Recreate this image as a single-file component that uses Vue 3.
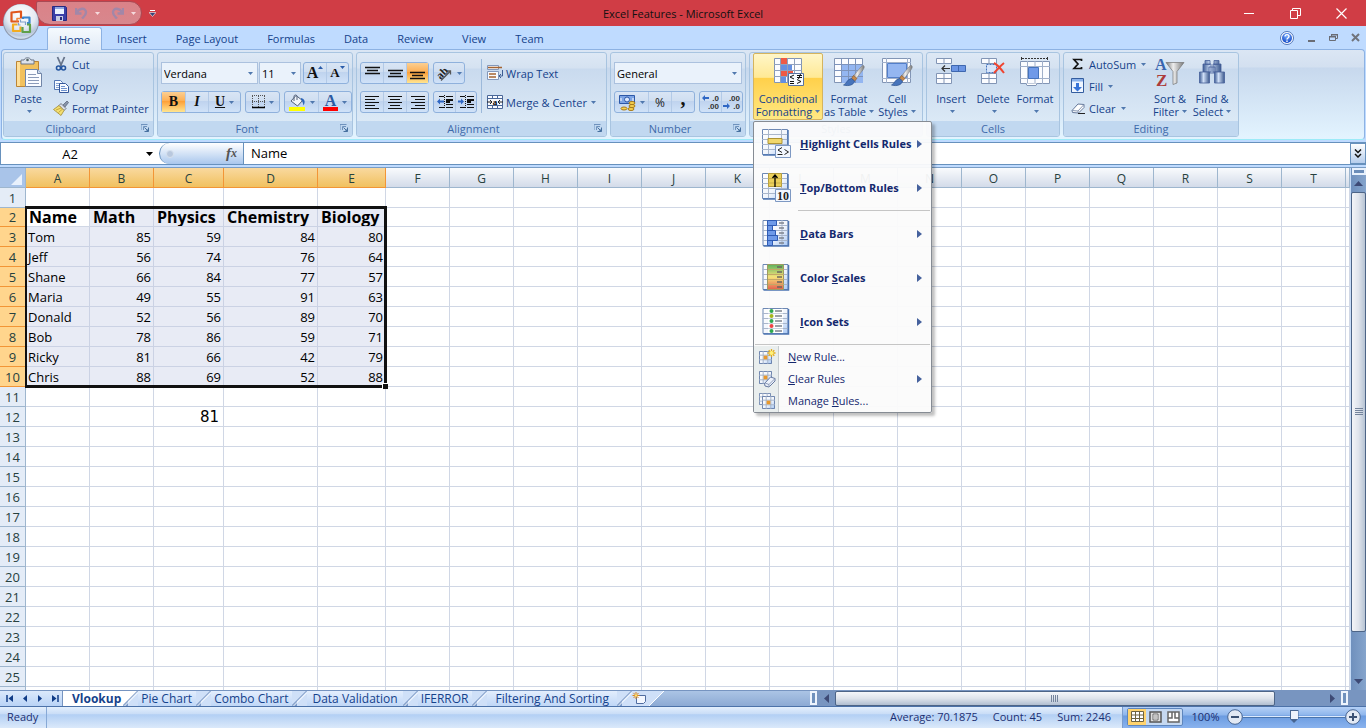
<script setup>
import { ref } from 'vue'

const tabs = ['Home', 'Insert', 'Page Layout', 'Formulas', 'Data', 'Review', 'View', 'Team']
const columns = 'ABCDEFGHIJKLMNOPQRST'.split('')
const data = {
  2: ['Name', 'Math', 'Physics', 'Chemistry', 'Biology'],
  3: ['Tom', 85, 59, 84, 80],
  4: ['Jeff', 56, 74, 76, 64],
  5: ['Shane', 66, 84, 77, 57],
  6: ['Maria', 49, 55, 91, 63],
  7: ['Donald', 52, 56, 89, 70],
  8: ['Bob', 78, 86, 59, 71],
  9: ['Ricky', 81, 66, 42, 79],
  10: ['Chris', 88, 69, 52, 88],
  12: ['', '', 81]
}
const cell = (r, c) => (data[r] && data[r][c] !== undefined ? data[r][c] : '')
const inRange = (r, c) => r >= 2 && r <= 10 && c < 5
const sheets = ['Vlookup', 'Pie Chart', 'Combo Chart', 'Data Validation', 'IFERROR', 'Filtering And Sorting']
const bigItems = [
  { icon: 'm-high', pre: '', key: 'H', post: 'ighlight Cells Rules' },
  { icon: 'm-top', pre: '', key: 'T', post: 'op/Bottom Rules' },
  { icon: 'm-bars', pre: '', key: 'D', post: 'ata Bars', sep: true },
  { icon: 'm-scale', pre: 'Color ', key: 'S', post: 'cales' },
  { icon: 'm-set', pre: '', key: 'I', post: 'con Sets' }
]
const smallItems = [
  { icon: 's-new', pre: '', key: 'N', post: 'ew Rule...' },
  { icon: 's-clear', pre: '', key: 'C', post: 'lear Rules', sub: true },
  { icon: 's-manage', pre: 'Manage ', key: 'R', post: 'ules...' }
]
const zoom = ref(50)
const nameBox = ref('A2')
const formula = ref('Name')
</script>

<template>
  <div class="app">
    <svg class="defs" aria-hidden="true">
      <defs>
        <linearGradient id="gBlue" x1="0" y1="0" x2="1" y2="1"><stop offset="0" stop-color="#fff" /><stop offset=".55" stop-color="#f1f5fc" /><stop offset="1" stop-color="#a8c8f5" /></linearGradient>
        <linearGradient id="gSilver" x1="0" y1="0" x2="1" y2="0"><stop offset="0" stop-color="#777" /><stop offset=".4" stop-color="#eee" /><stop offset="1" stop-color="#777" /></linearGradient>
        <linearGradient id="gNavy" x1="0" y1="0" x2="1" y2="0"><stop offset="0" stop-color="#3d5c94" /><stop offset=".4" stop-color="#cfdff7" /><stop offset="1" stop-color="#3a578c" /></linearGradient>
        <linearGradient id="gScale" x1="0" y1="0" x2="0" y2="1"><stop offset="0" stop-color="#5eb35e" /><stop offset=".5" stop-color="#f6e37a" /><stop offset="1" stop-color="#e5604e" /></linearGradient>
        <radialGradient id="gOrb" cx=".5" cy=".3" r=".75"><stop offset="0" stop-color="#fff" /><stop offset=".55" stop-color="#e6ebf3" /><stop offset=".8" stop-color="#b6c5da" /><stop offset="1" stop-color="#eef6ff" /></radialGradient>
        <radialGradient id="gHelp" cx=".5" cy=".3" r=".7"><stop offset="0" stop-color="#7db0ff" /><stop offset="1" stop-color="#1046c4" /></radialGradient>
      </defs>
      <symbol id="dd" viewBox="0 0 5 3"><path d="M0 0h5L2.500 3z" fill="#5078ae" /></symbol>
      <symbol id="launch" viewBox="0 0 8 8"><path d="M0 6V.5h6.500M2.500 6V2.500H6" fill="none" stroke="#6f92bd" /><path d="M3.500 3.500l3 3M7.500 3.500v4h-4" fill="none" stroke="#47709f" /><path d="M7.500 4.500v3h-3z" fill="#47709f" /></symbol>
      <symbol id="sheet" viewBox="0 0 28 28"><path d="M1.500 1.500h25v25h-25z" fill="url(#gBlue)" stroke="#6d88b4" /><path d="M1 6.500h26M1 11.500h26M1 16.500h26M1 21.500h26M7.500 1v26M20.500 1v26" stroke="#a9b6cb" fill="none" /><path d="M27 2v25H2" fill="none" stroke="#4e75b2" stroke-width="1.500" /></symbol>
      <symbol id="brush" viewBox="0 0 22 22"><path d="M20.500 .5c1.500 1 .5 3-1 5l-7 9-3-2.500L17 3c1.500-2 2.500-3 3.500-2.500z" fill="url(#gSilver)" stroke="#7c7f86" stroke-width=".6" /><path d="M10.500 10.500l3.500 3-2.500 2.500-3-2.500z" fill="#c88a4b" stroke="#87552c" stroke-width=".6" /><path d="M8.500 13.500l3 2.500c-.5 4-6 5.500-11 4 3-1 3.500-6 8-6.500z" fill="#4774bb" stroke="#29508e" stroke-width=".7" /></symbol>
      <symbol id="m-high" viewBox="0 0 32 32"><use href="#sheet" x="1" y="0" width="28" height="28" /><path d="M8 10.500h14v5H8z" fill="#f1d76b" stroke="#ad9335" /><path d="M15.500 17.500h15v12h-15z" fill="#f2f7ff" stroke="#7e99c3" /><path d="M22 19.500l-4 2.500 4 2.500M17.500 26.500h5M24.500 21.500l4 2.500-4 2.500" fill="none" stroke="#222" /></symbol>
      <symbol id="m-top" viewBox="0 0 32 32"><use href="#sheet" x="1" y="0" width="28" height="28" /><path d="M8.500 1.500h13v13h-13z" fill="#ecd15c" stroke="#b59c3e" /><path d="M8 6.500h14M8 11h14" stroke="#c9ae48" /><path d="M15 15V3M12.500 6L15 3l2.500 3" fill="none" stroke="#000" stroke-width="1.300" /><path d="M15.500 17.500h15v12h-15z" fill="#f2f7ff" stroke="#7e99c3" /><text x="23" y="28" text-anchor="middle" font-family="Liberation Serif, serif" font-size="12" font-weight="700" fill="#222">10</text></symbol>
      <symbol id="m-bars" viewBox="0 0 32 32"><use href="#sheet" x="1" y="1" width="29" height="28" /><path d="M7.500 2.500h9v5h-4v5h3v5h2v5h-5v5h-5z" fill="#6e9ae9" stroke="#2f5cb5" /><path d="M8 7.500h6M8 12.500h6M8 17.500h9M8 22.500h7" stroke="#2f5cb5" /><path d="M19 5h5M19 10h5M19 15h5M19 20h5M19 25h5" stroke="#7c828d" stroke-width="1.500" /></symbol>
      <symbol id="m-scale" viewBox="0 0 32 32"><use href="#sheet" x="1" y="1" width="29" height="28" /><path d="M7.500 2.500h16v25h-16z" fill="url(#gScale)" stroke="#a09a61" /><path d="M8 7.500h16M8 12.500h16M8 17.500h16M8 22.500h16" stroke="#c4a867" /><path d="M17 5h5M17 10h5M17 15h5M17 20h5M17 25h5" stroke="#6b6660" stroke-width="1.500" /></symbol>
      <symbol id="m-set" viewBox="0 0 32 32"><use href="#sheet" x="1" y="1" width="29" height="28" /><path d="M8 3h15v24H8z" fill="#fff" /><path d="M8 7.500h15M8 12.500h15M8 17.500h15M8 22.500h15" stroke="#c9d2e0" /><circle cx="11.500" cy="5" r="2" fill="#2fa84f" /><circle cx="11.500" cy="10" r="2" fill="#a5b51d" /><circle cx="11.500" cy="15" r="2" fill="#2fa84f" /><circle cx="11.500" cy="20" r="2" fill="#ef4444" /><circle cx="11.500" cy="25" r="2" fill="#2fa84f" /><path d="M15 5h7M15 10h7M15 15h7M15 20h7M15 25h7" stroke="#7c828d" stroke-width="1.500" /></symbol>
      <symbol id="mini" viewBox="0 0 14 14"><path d="M.5.5h13v13H.5z" fill="url(#gBlue)" stroke="#6079a6" /><path d="M0 4.500h14M0 9.500h14M4.500 0v14M9.500 0v14" stroke="#a0afc6" /><path d="M5 5h4v4H5z" fill="#e8982c" /></symbol>
      <symbol id="s-new" viewBox="0 0 17 17"><use href="#mini" x="0" y="2" width="13" height="13" /><path d="M12.500 0v8M8.500 4h8M9.700 1.200l5.600 5.600M15.300 1.200L9.700 6.800" stroke="#e3ad1e" stroke-width="1.300" /><circle cx="12.500" cy="4" r="2" fill="#fff27a" /></symbol>
      <symbol id="s-clear" viewBox="0 0 17 17"><use href="#mini" x="0" y="0" width="13" height="13" /><path d="M5.500 12.500l6-6.500 4.500 1.500v2.500l-6 6-4-1z" fill="#edf2fb" stroke="#6679a0" /><path d="M6 12l4 1.500 6-6M10 13.500V16" fill="none" stroke="#8c9bb8" /></symbol>
      <symbol id="s-manage" viewBox="0 0 17 17"><use href="#mini" x="0" y="0" width="12" height="12" /><use href="#mini" x="3" y="3" width="13" height="13" /></symbol>
    </svg>

    <header class="title">
      <button class="orb" aria-label="Office Button">
        <svg width="38" height="38" viewBox="0 0 38 38"><circle cx="19" cy="19" r="18" fill="#8d99ad" /><circle cx="19" cy="18.500" r="17.300" fill="url(#gOrb)" /><g fill="none" stroke-width="2.200" stroke-linejoin="round"><path d="M17 18.500H9.500V9.500l9.500-1v7" stroke="#e0561c" /><path d="M15 18.500v-3h3" stroke="#f0873a" stroke-width="1.600" /><path d="M21 16v-1.500h6.500V20h-2.500" stroke="#3a86cf" /><path d="M15.500 21.500h-4.500V28h7.500v-4.500" stroke="#f3ac20" /><path d="M25 21.500h3V29h-7.500v-5" stroke="#5fa04a" /></g><path d="M18.500 16.500v2.500h2M20.500 19h3v3M18.500 22h-2v-2" fill="none" stroke="#7f9fcb" stroke-width="1.200" /></svg>
      </button>
      <div class="qat">
        <button aria-label="Save"><svg width="15" height="15" viewBox="0 0 15 15"><path d="M.5.500h13l1 1v13H.5z" fill="#3b3fa8" stroke="#262a80" /><path d="M3 1h9v7H3z" fill="#eaf2ff" /><path d="M3 1h9v2H3z" fill="#8fa6e0" /><path d="M4 10h7v5H4z" fill="#c8cde4" /><path d="M8 11h2v3H8z" fill="#272b7b" /></svg></button>
        <button aria-label="Undo"><svg width="13" height="14" viewBox="0 0 13 14"><path d="M1 2v5.500h5.500M1.500 7C4 2 11 1 11 6.500c0 3-2.500 4.500-4 6" fill="none" stroke="#a287a8" stroke-width="2.400" /></svg></button>
        <button aria-label="Undo list" class="arrow"><svg width="5" height="3"><path d="M0 0h5L2.500 3z" fill="#f5dadd" /></svg></button>
        <button aria-label="Redo"><svg width="13" height="14" viewBox="0 0 13 14"><path d="M12 2v5.500H6.500M11.500 7C9 2 2 1 2 6.500c0 3 2.500 4.500 4 6" fill="none" stroke="#a287a8" stroke-width="2.400" /></svg></button>
        <button aria-label="Redo list" class="arrow"><svg width="5" height="3"><path d="M0 0h5L2.500 3z" fill="#f5dadd" /></svg></button>
      </div>
      <button class="custom" aria-label="Customize Quick Access Toolbar"><svg width="7" height="7"><path d="M1 0h5v1H1z" fill="#fff" /><path d="M0 2.500h7L3.500 6.500z" fill="#33457a" stroke="#f5dede" stroke-width=".7" /></svg></button>
      <h1>Excel Features - Microsoft Excel</h1>
      <div class="winbtns">
        <button aria-label="Minimize"><svg width="11" height="11"><path d="M0 5.500h10" stroke="#fff" /></svg></button>
        <button aria-label="Restore"><svg width="11" height="11"><path d="M.5 2.500h7v8h-7zM2.500 2.500v-2h8v7h-3" fill="none" stroke="#fff" /></svg></button>
        <button aria-label="Close"><svg width="11" height="11"><path d="M.5.500l10 10M10.500.500l-10 10" stroke="#fff" stroke-width="1.200" /></svg></button>
      </div>
    </header>

    <nav class="tabs">
      <button v-for="(t, i) in tabs" :key="t" :class="['tab', { on: i === 0 }]">{{ t }}</button>
      <div class="docbtns">
        <button aria-label="Help"><svg width="14" height="14"><circle cx="7" cy="7" r="6.500" fill="#fff" stroke="#5075b8" /><circle cx="7" cy="7" r="5" fill="url(#gHelp)" /><path d="M5 5.500C5 3 9 3 9 5.500 9 7 7 7 7 8.500M7 9.500V11" fill="none" stroke="#fff" stroke-width="1.400" /></svg></button>
        <button aria-label="Minimize workbook"><svg width="9" height="10"><path d="M1 8h7" stroke="#6a6d75" stroke-width="2" /></svg></button>
        <button aria-label="Restore workbook"><svg width="9" height="10"><path d="M2.500 3V1.500h6v4H7M.5 3.500h6v4h-6z" fill="none" stroke="#6a6d75" /><path d="M0 3h7v1.500H0M2 1h7v1.500H2" fill="#6a6d75" /></svg></button>
        <button aria-label="Close workbook"><svg width="9" height="9"><path d="M1 1l7 7M8 1L1 8" stroke="#70747c" stroke-width="2" /></svg></button>
      </div>
    </nav>

    <section class="ribbon">
      <section class="group g-clip">
        <div class="body">
          <button class="big w41"><svg width="32" height="32" viewBox="0 0 32 32"><path d="M4.500 4.500h22v25h-22z" fill="#f2c15d" stroke="#bb8536" /><path d="M5 5h3v24H5z" fill="#ffe09a" /><path d="M9 3h3c1-3 6-3 7 0h3v4H9z" fill="#dce2ec" stroke="#6c7789" /><circle cx="15.500" cy="3" r="1.300" fill="#566" /><path d="M13.500 12.500h12l4 4v13h-16z" fill="#fafcff" stroke="#7186a8" /><path d="M25.500 12.500v4h4" fill="#ccd9ee" stroke="#7186a8" /><path d="M16 17.500h8M16 20.500h11M16 23.500h11M16 26.500h11" stroke="#8b9bb9" /></svg><span>Paste</span><span class="l2"><svg class="dd"><use href="#dd" /></svg></span></button>
          <div class="stack">
            <button class="small"><svg width="16" height="16" viewBox="0 0 16 16"><path d="M4.500 1l4 9M11.500 1l-4 9" stroke="#67748a" stroke-width="1.800" /><circle cx="5.500" cy="12" r="2" fill="none" stroke="#24559f" stroke-width="1.600" /><circle cx="10.500" cy="12" r="2" fill="none" stroke="#24559f" stroke-width="1.600" /></svg>Cut</button>
            <button class="small"><svg width="16" height="16" viewBox="0 0 16 16"><path d="M1.500 2.500h6l2 2v7h-8z" fill="#f8fbff" stroke="#5377b5" /><path d="M3 5.500h4M3 7.500h4M3 9.500h3" stroke="#85a2d2" /><path d="M6.500 5.500h6l3 3v6h-9z" fill="#f8fbff" stroke="#35589b" /><path d="M8 8.500h4M8 10.500h6M8 12.500h6" stroke="#6e92ce" /></svg>Copy</button>
            <button class="small"><svg width="16" height="16" viewBox="0 0 16 16"><path d="M10 5l4-4 1.500 1.500L12 7z" fill="#8894a8" stroke="#505c74" stroke-width=".7" /><path d="M8 3.500l5 5-2 2-5-5z" fill="#d9dde6" stroke="#747a86" /><path d="M6 5.500l5 5-3 5L.5 9.500z" fill="#f3df72" stroke="#a18a31" stroke-width=".8" /><path d="M3 10l5-2M5.500 12.500l3.500-3" stroke="#c9a93c" /></svg>Format Painter</button>
          </div>
        </div>
        <footer>Clipboard<button class="launch" aria-label="Clipboard options"><svg width="8" height="8"><use href="#launch" /></svg></button></footer>
      </section>

      <section class="group g-font">
        <div class="body rows">
          <div class="row tight">
            <label class="combo c-font"><select aria-label="Font"><option>Verdana</option></select><svg class="dd"><use href="#dd" /></svg></label>
            <label class="combo c-size"><select aria-label="Font size"><option>11</option></select><svg class="dd"><use href="#dd" /></svg></label>
            <div class="seg push">
              <button class="ser a1" aria-label="Grow Font">A<svg width="5" height="3"><path d="M0 3h5L2.500 0z" fill="#2a5caa" /></svg></button>
              <button class="ser a2" aria-label="Shrink Font">A<svg width="5" height="3"><path d="M0 0h5L2.500 3z" fill="#2a5caa" /></svg></button>
            </div>
          </div>
          <div class="row">
            <div class="seg"><button class="ser on">B</button><button class="ser it">I</button><button class="ser un w32"><span>U</span><svg class="dd"><use href="#dd" /></svg></button></div>
            <div class="seg"><button class="w33" aria-label="Borders"><svg width="13" height="14"><path d="M.5 1v11M6.500 1v11M12.500 1v11M0 .5h13M0 6.500h13" stroke="#555" stroke-dasharray="1 1" /><path d="M0 12.500h13" stroke="#000" stroke-width="1.500" /></svg><svg class="dd"><use href="#dd" /></svg></button></div>
            <div class="seg push"><button class="w33" aria-label="Fill Color"><svg width="17" height="17" viewBox="0 0 17 17"><path d="M7 1.500l6.500 5-5 5.500L2 7z" fill="#f1f5fa" stroke="#53617a" /><path d="M5 7V2.500c0-2 3-2 3 0V6" fill="none" stroke="#53617a" /><path d="M12 4c4 1 4.500 4 2.500 7.500C14 9 13.500 7 12 6z" fill="#2c65b8" /><path d="M0 13h16v4H0z" fill="#ff0" /></svg><svg class="dd"><use href="#dd" /></svg></button>
              <button class="w33 fcol" aria-label="Font Color"><span class="ser">A</span><svg class="dd"><use href="#dd" /></svg></button></div>
          </div>
        </div>
        <footer>Font<button class="launch" aria-label="Font options"><svg width="8" height="8"><use href="#launch" /></svg></button></footer>
      </section>

      <section class="group g-align">
        <div class="body">
          <div class="rows">
            <div class="row">
              <div class="seg">
                <button class="w22" aria-label="Top Align"><svg width="15" height="14"><path d="M0 1.500h15M2 4.500h11M0 7.500h15" stroke="#111" stroke-width="1.300" /></svg></button>
                <button aria-label="Middle Align"><svg width="15" height="14"><path d="M0 4.500h15M2 7.500h11M0 10.500h15" stroke="#111" stroke-width="1.300" /></svg></button>
                <button class="on w22" aria-label="Bottom Align"><svg width="15" height="14"><path d="M0 6.500h15M2 9.500h11M0 12.500h15" stroke="#111" stroke-width="1.300" /></svg></button>
              </div>
              <div class="seg"><button class="w30" aria-label="Orientation"><svg width="17" height="16" viewBox="0 0 17 16"><path d="M5 15.500L14.500 6M11 6h3.500v3.500" fill="none" stroke="#555" stroke-width="1.300" /><text x="1" y="12" transform="rotate(-45 6 9)" font-family="Liberation Serif, serif" font-size="11" font-weight="700" fill="#222">ab</text></svg><svg class="dd"><use href="#dd" /></svg></button></div>
            </div>
            <div class="row">
              <div class="seg">
                <button class="w22" aria-label="Align Left"><svg width="14" height="13"><path d="M0 .5h14M0 3.500h10M0 6.500h14M0 9.500h10M0 12.500h14" stroke="#111" /></svg></button>
                <button aria-label="Center"><svg width="14" height="13"><path d="M0 .5h14M2 3.500h10M0 6.500h14M2 9.500h10M0 12.500h14" stroke="#111" /></svg></button>
                <button class="w22" aria-label="Align Right"><svg width="14" height="13"><path d="M0 .5h14M4 3.500h10M0 6.500h14M4 9.500h10M0 12.500h14" stroke="#111" /></svg></button>
              </div>
              <div class="seg">
                <button class="w21" aria-label="Decrease Indent"><svg width="16" height="14"><path d="M2 1.500h5M9 1.500h7M2 12.500h5M9 12.500h7M9 9.500h7" stroke="#111" /><path d="M9 5h7M9 7h4" stroke="#111" stroke-width="2" /><path d="M7.500 0v14" stroke="#111" stroke-dasharray="1 1" /><path d="M0 6.500l3-3v2h4v2H3v2z" fill="#2f67c4" /></svg></button>
                <button class="w21" aria-label="Increase Indent"><svg width="16" height="14"><path d="M2 1.500h5M9 1.500h7M2 12.500h5M9 12.500h7M9 9.500h7" stroke="#111" /><path d="M9 5h7M9 7h4" stroke="#111" stroke-width="2" /><path d="M7.500 0v14" stroke="#111" stroke-dasharray="1 1" /><path d="M6 6.500l-3-3v2H0v2h3v2z" fill="#2f67c4" /></svg></button>
              </div>
            </div>
          </div>
          <i class="vsep"></i>
          <div class="rows">
            <button class="small"><svg width="16" height="16" viewBox="0 0 16 16"><path d="M.5.500h11v4H.5zM.5 6.500h11v8H.5z" fill="#f7faff" stroke="#8398bb" /><path d="M1 2.500h14M2 9h7M2 12h7" stroke="#a56432" stroke-width="1.500" /><path d="M15.500 5v6H12M14 9l-2 2 2 2" fill="none" stroke="#3d5d93" /></svg>Wrap Text</button>
            <button class="small"><svg width="16" height="16" viewBox="0 0 16 16"><path d="M.5 1.500h15v13H.5z" fill="#f7faff" stroke="#4a6798" /><path d="M0 4.500h16M0 11.500h16M5.500 1v3M10.500 1v3M5.500 12v3M10.500 12v3" stroke="#4a6798" /><path d="M0 8h5M3 6l2 2-2 2M16 8h-5M13 6l-2 2 2 2" stroke="#222" fill="none" /><text x="8" y="11" text-anchor="middle" font-family="Liberation Serif, serif" font-weight="700" font-size="9">a</text></svg>Merge &amp; Center<svg class="dd"><use href="#dd" /></svg></button>
          </div>
        </div>
        <footer>Alignment<button class="launch" aria-label="Alignment options"><svg width="8" height="8"><use href="#launch" /></svg></button></footer>
      </section>

      <section class="group g-num">
        <div class="body rows">
          <label class="combo c-num"><select aria-label="Number format"><option>General</option></select><svg class="dd"><use href="#dd" /></svg></label>
          <div class="row">
            <div class="seg">
              <button class="w33" aria-label="Accounting Number Format"><svg width="17" height="17" viewBox="0 0 17 17"><path d="M.5 1.500h15v8H.5z" fill="#7da4e4" stroke="#2c58a8" /><circle cx="8" cy="5.500" r="2.500" fill="#dbe8ff" stroke="#2c58a8" /><path d="M2 4v3M14 4v3" stroke="#fff" /><ellipse cx="13" cy="9" rx="3" ry="1.500" fill="#f8d352" stroke="#a77a18" /><ellipse cx="13" cy="12" rx="3" ry="1.500" fill="#f8d352" stroke="#a77a18" /><ellipse cx="12" cy="15" rx="3" ry="1.500" fill="#f8d352" stroke="#a77a18" /><ellipse cx="5" cy="14.500" rx="3" ry="1.500" fill="#f8d352" stroke="#a77a18" /></svg><svg class="dd"><use href="#dd" /></svg></button>
              <button class="pct">%</button><button class="ser comma">,</button>
            </div>
            <div class="seg push">
              <button class="w21" aria-label="Increase Decimal"><svg width="18" height="16" viewBox="0 0 18 16"><path d="M0 4l3-3v2h4v2H3v2z" fill="#2f67c4" /><text x="17" y="7" text-anchor="end" class="dec">.0</text><text x="17" y="15" text-anchor="end" class="dec">.00</text></svg></button>
              <button class="w21" aria-label="Decrease Decimal"><svg width="18" height="16" viewBox="0 0 18 16"><path d="M7 12L4 9v2H0v2h4v2z" fill="#2f67c4" /><text x="17" y="7" text-anchor="end" class="dec">.00</text><text x="17" y="15" text-anchor="end" class="dec">.0</text></svg></button>
            </div>
          </div>
        </div>
        <footer>Number<button class="launch" aria-label="Number options"><svg width="8" height="8"><use href="#launch" /></svg></button></footer>
      </section>

      <section class="group g-styles">
        <div class="body">
          <div class="cf">
            <button class="big w70 hot"><svg width="32" height="32" viewBox="0 0 32 32"><path d="M2.500 1.500h27v24h-27z" fill="#fbfcff" stroke="#8295b5" /><path d="M9 1h7v6H9zM9 14h12v6H9z" fill="#ee5a45" /><path d="M9 7h11v7H9zM9 20h5v6H9z" fill="#648fe0" /><path d="M2 7.500h28M2 13.500h28M2 19.500h28M8.500 1v25M15.500 1v25M22.500 1v25" stroke="#90a0bd" /><path d="M16.500 16.500h15v12h-15z" fill="#f8fbff" stroke="#5873a1" /><path d="M22 18l-4 2 4 2M25 18.500h5M25 20.500h5M28.500 17l-2 5M18 24.500h4M18 26.500h4M25 22.500l4 2-4 2" fill="none" stroke="#111" /></svg><span>Conditional</span><span class="l2">Formatting<svg class="dd"><use href="#dd" /></svg></span></button>
            <div class="menu" role="menu">
              <template v-for="m in bigItems" :key="m.icon">
                <i v-if="m.sep" class="msep inset"></i>
                <button role="menuitem" class="mi"><svg width="32" height="32"><use :href="'#' + m.icon" /></svg><span>{{ m.pre }}<u>{{ m.key }}</u>{{ m.post }}</span><svg class="sub" width="5" height="8"><path d="M0 0l5 4-5 4z" fill="#45619d" /></svg></button>
              </template>
              <i class="msep"></i>
              <div class="lower">
                <button v-for="m in smallItems" :key="m.icon" role="menuitem" class="mi sm"><svg width="17" height="17"><use :href="'#' + m.icon" /></svg><span>{{ m.pre }}<u>{{ m.key }}</u>{{ m.post }}</span><svg v-if="m.sub" class="sub" width="5" height="8"><path d="M0 0l5 4-5 4z" fill="#45619d" /></svg></button>
              </div>
            </div>
          </div>
          <button class="big w52"><svg width="32" height="32" viewBox="0 0 32 32"><path d="M1.500 1.500h28v24h-28z" fill="#fbfcff" stroke="#8295b5" /><path d="M8 8h22v18H8z" fill="#94b6f1" /><path d="M1 7.500h29M1 13.500h29M1 19.500h29M8.500 1v25M15.500 1v25M22.500 1v25" stroke="#7d93bb" /><use href="#brush" x="10" y="8" width="22" height="22" /></svg><span>Format</span><span class="l2">as Table<svg class="dd"><use href="#dd" /></svg></span></button>
          <button class="big w44"><svg width="32" height="32" viewBox="0 0 32 32"><path d="M1.500 1.500h28v24h-28z" fill="#fbfcff" stroke="#8295b5" /><path d="M1 5.500h29M1 21.500h29M5.500 1v25M26.500 1v25" stroke="#a1b0ca" /><path d="M6.500 6.500h19v14h-19z" fill="#94b6f1" stroke="#537fca" /><use href="#brush" x="10" y="8" width="22" height="22" /></svg><span>Cell</span><span class="l2">Styles<svg class="dd"><use href="#dd" /></svg></span></button>
        </div>
        <footer>Styles</footer>
      </section>

      <section class="group g-cells">
        <div class="body">
          <button class="big w41"><svg width="32" height="32" viewBox="0 0 32 32"><path d="M1.500 1.500h15v5h-15zM9 1v6M1.500 16.500h15v10h-15zM1 21.500h16M9 16v11" fill="#fbfcff" stroke="#8295b5" /><path d="M16.500 8.500h14v6h-14z" fill="#6b95e4" stroke="#3e67af" /><path d="M23.500 8v7" stroke="#3e67af" /><path d="M15 11.500H7M10 8.500l-3 3 3 3" fill="none" stroke="#333" stroke-width="1.200" /></svg><span>Insert</span><span class="l2"><svg class="dd"><use href="#dd" /></svg></span></button>
          <button class="big w42"><svg width="32" height="32" viewBox="0 0 32 32"><path d="M4.500 1.500h15v5h-15zM12 1v6M4.500 16.500h15v10h-15zM4 21.500h16M12 16v11" fill="#fbfcff" stroke="#8295b5" /><path d="M9.500 7.500h10v8h-10z" fill="#d8e5fa" stroke="#4372bd" stroke-dasharray="2 1" /><path d="M17 6c4 2 7 6 10 10M27 6c-4 3-7 7-10 10" fill="none" stroke="#ef4430" stroke-width="2" /></svg><span>Delete</span><span class="l2"><svg class="dd"><use href="#dd" /></svg></span></button>
          <button class="big w41"><svg width="32" height="32" viewBox="0 0 32 32"><path d="M3 1.500h25" stroke="#333" stroke-dasharray="2 1" /><path d="M2.500 0v3M28.500 0v3" stroke="#333" /><path d="M1.500 4.500h29v22h-29z" fill="#fbfcff" stroke="#8295b5" /><path d="M1 9.500h30M1 21.500h30M8.500 4v23M23.500 4v23M16 4v23" stroke="#a1b0ca" /><path d="M9.500 10.500h10v11h-10z" fill="#6f99e8" stroke="#4473bd" /><path d="M2 26.500h5l1 2h9l1-2" fill="#fff" stroke="#8295b5" /></svg><span>Format</span><span class="l2"><svg class="dd"><use href="#dd" /></svg></span></button>
        </div>
        <footer>Cells</footer>
      </section>

      <section class="group g-edit">
        <div class="body">
          <div class="stack">
            <button class="small"><svg width="14" height="14"><path d="M10.500 4V2.500H3L7 7l-4 4.500h7.500V10" fill="none" stroke="#111" stroke-width="1.700" /></svg>AutoSum<svg class="dd"><use href="#dd" /></svg></button>
            <button class="small"><svg width="14" height="16"><path d="M.5.500h12v14H.5z" fill="#eef5ff" stroke="#335d9f" /><path d="M1 1h11v2.500H1z" fill="#8ab1ea" /><path d="M5 5h3v4h3l-4.500 4.500L2 9h3z" fill="#3874d8" /></svg>Fill<svg class="dd"><use href="#dd" /></svg></button>
            <button class="small"><svg width="14" height="14"><path d="M1 9.500L7 3l6 .5v3L7.500 12l-6-.5z" fill="#fff" stroke="#66799b" /><path d="M1 9.500l6 .5 6-6.500M7 10v2" fill="none" stroke="#8899b5" /><path d="M7 12.500h7" stroke="#222" /></svg>Clear<svg class="dd"><use href="#dd" /></svg></button>
          </div>
          <button class="big w42"><svg width="32" height="32" viewBox="0 0 32 32"><text x="1" y="13" font-family="Liberation Serif, serif" font-size="16" font-weight="700" fill="#3864ae">A</text><text x="2" y="29" font-family="Liberation Serif, serif" font-size="17" font-weight="700" fill="#ac3c3c">Z</text><path d="M12 5.500h18l-7 9V26l-4 1.500v-13z" fill="url(#gSilver)" stroke="#747474" stroke-width=".7" /></svg><span>Sort &amp;</span><span class="l2">Filter<svg class="dd"><use href="#dd" /></svg></span></button>
          <button class="big w42"><svg width="32" height="32" viewBox="0 0 32 32"><path d="M9 3.500h5v4H9zM18 3.500h5v4h-5zM7 7h8v8H7zM17 7h8v8h-8zM13 10h6v6h-6z" fill="url(#gNavy)" stroke="#46619a" stroke-width=".8" /><path d="M3.500 15h10v11h-10z" fill="url(#gNavy)" stroke="#46619a" stroke-width=".8" /><path d="M18.500 15h10v11h-10z" fill="url(#gNavy)" stroke="#46619a" stroke-width=".8" /></svg><span>Find &amp;</span><span class="l2">Select<svg class="dd"><use href="#dd" /></svg></span></button>
        </div>
        <footer>Editing</footer>
      </section>
    </section>

    <div class="fbar">
      <div class="namebox"><input v-model="nameBox" aria-label="Name Box" /><svg width="7" height="4"><path d="M0 0h7L3.500 4z" fill="#000" /></svg></div>
      <div class="fx"><i></i><button aria-label="Insert Function"><em>f</em><em class="x">x</em></button></div>
      <input v-model="formula" class="finput" aria-label="Formula Bar" />
      <button class="expand" aria-label="Expand Formula Bar"><svg width="8" height="9"><path d="M1 .5l3 3 3-3M1 5l3 3 3-3" fill="none" stroke="#111" stroke-width="1.500" /></svg></button>
    </div>

    <main class="work">
      <div class="gridwrap">
        <table>
          <colgroup><col class="c0" /><col v-for="c in columns" :key="c" :class="'c' + c" /><col /></colgroup>
          <thead><tr><th class="corner"><svg width="11" height="11"><path d="M11 0v11H0z" fill="#e9f1fc" /></svg></th><th v-for="(c, i) in columns" :key="c" :class="{ hl: i < 5 }">{{ c }}</th><th></th></tr></thead>
          <tbody>
            <tr v-for="r in 26" :key="r" :class="'r' + r">
              <th :class="{ hl: r > 1 && r < 11 }">{{ r < 26 ? r : '' }}</th>
              <td v-for="(c, i) in columns" :key="c" :class="{ sel: inRange(r, i) && !(r === 2 && i === 0), num: typeof cell(r, i) === 'number' }">{{ cell(r, i) }}</td><td></td>
            </tr>
          </tbody>
        </table>
        <div class="selection"><i></i></div>
      </div>
      <div class="vbar">
        <i class="split"></i>
        <button aria-label="Scroll up"><svg width="9" height="5"><path d="M0 5h9L4.500 0z" fill="#3d4a75" /></svg></button>
        <div class="thumb"><svg width="8" height="8"><path d="M0 .5h8M0 2.500h8M0 4.500h8M0 6.500h8" stroke="#74849c" /></svg></div>
        <div class="rest"></div>
        <button aria-label="Scroll down"><svg width="9" height="5"><path d="M0 0h9L4.500 5z" fill="#3d4a75" /></svg></button>
      </div>
    </main>

    <div class="bottom">
      <div class="sheets">
        <div class="navs">
          <button aria-label="First sheet"><svg width="8" height="7"><path d="M1 0v7" stroke="#103c87" stroke-width="1.500" /><path d="M7 0v7L2.500 3.500z" fill="#103c87" /></svg></button>
          <button aria-label="Previous sheet"><svg width="8" height="7"><path d="M6 0v7L2 3.500z" fill="#103c87" /></svg></button>
          <button aria-label="Next sheet"><svg width="8" height="7"><path d="M2 0v7l4-3.500z" fill="#103c87" /></svg></button>
          <button aria-label="Last sheet"><svg width="8" height="7"><path d="M7 0v7" stroke="#103c87" stroke-width="1.500" /><path d="M1 0v7l4.500-3.500z" fill="#103c87" /></svg></button>
        </div>
        <template v-for="(s, i) in sheets" :key="s">
          <button :class="['sheet', 's' + i]">{{ s }}</button>
          <svg class="slant" width="15" height="15"><path :d="'M0 0h15L0 15z'" :fill="i ? '#cfe0f8' : '#fff'" /><path d="M15 0v15H0z" fill="#cfe0f8" /><path d="M0 15l5-5v5z" fill="#7d9ccb" /><path d="M0 14.500L14.500 0" stroke="#7290bd" /><path d="M1.500 15L15 1.500" stroke="#fff" /></svg>
        </template>
        <button class="newsheet" aria-label="Insert Worksheet"><svg width="15" height="13"><path d="M4.500 3.500h9v6l-2 2h-7z" fill="#f3f7ff" stroke="#506da0" /><path d="M4 0v7M.5 3.500h7M1.500 1l5 5M6.500 1l-5 5" stroke="#db8519" /><circle cx="4" cy="3.500" r="1.200" fill="#ffe26b" /></svg></button>
        <svg width="15" height="15"><path d="M0 0h15L0 15z" fill="#cfe0f8" /><path d="M0 15L15 0" stroke="#fff" /></svg>
      </div>
      <div class="hbar">
        <i class="split"></i>
        <button aria-label="Scroll left"><svg width="5" height="9"><path d="M5 0v9L0 4.500z" fill="#3d4a75" /></svg></button>
        <div class="thumb"><svg width="8" height="7"><path d="M.5 0v7M2.500 0v7M4.500 0v7M6.500 0v7" stroke="#74849c" /></svg></div>
        <div class="rest"></div>
        <button aria-label="Scroll right"><svg width="5" height="9"><path d="M0 0v9l5-4.500z" fill="#3d4a75" /></svg></button>
        <i class="split"></i>
      </div>
    </div>

    <footer class="status">
      <span class="ready">Ready</span>
      <div class="stats"><span>Average: 70.1875</span><span>Count: 45</span><span>Sum: 2246</span></div>
      <div class="zoomer">
        <div class="views">
          <button class="on" aria-label="Normal"><svg width="13" height="11"><path d="M.5.500h12v10H.5zM0 4h13M0 7.500h13M4.500 0v11M8.500 0v11" fill="#fff" stroke="#6e6340" /></svg></button>
          <button aria-label="Page Layout"><svg width="13" height="12"><path d="M1 1h11v10H1z" fill="#ddd" stroke="#555" stroke-width="1.500" /><path d="M4 3h5v6H4z" fill="#fff" stroke="#666" /><path d="M5 5h3M5 7h3" stroke="#888" /></svg></button>
          <button aria-label="Page Break Preview"><svg width="13" height="12"><path d="M1 1h11v10H1z" fill="#fff" stroke="#666" stroke-width="1.500" /><path d="M5 1v6H1M8 1v6h4" fill="none" stroke="#666" stroke-width="1.500" /></svg></button>
        </div>
        <button class="pc">100%</button>
        <button class="round" aria-label="Zoom out"><svg width="16" height="16"><circle cx="8" cy="8" r="7.300" fill="#e2e9f4" stroke="#476592" /><path d="M4 8h8" stroke="#3b5173" stroke-width="2" /></svg></button>
        <input v-model="zoom" type="range" min="0" max="100" aria-label="Zoom" />
        <button class="round" aria-label="Zoom in"><svg width="16" height="16"><circle cx="8" cy="8" r="7.300" fill="#e2e9f4" stroke="#476592" /><path d="M4 8h8M8 4v8" stroke="#3b5173" stroke-width="2" /></svg></button>
      </div>
    </footer>
  </div>
</template>

<style>
body { overflow: hidden; }
</style>

<style scoped>
.app { display: flex; flex-direction: column; height: 100vh; overflow: hidden; background: #bfdbff; color: #15428b; font-family: "Open Sans", "Noto Sans", sans-serif; font-size: 11px; }
.app * { box-sizing: border-box; }
.defs { position: absolute; width: 0; height: 0; }
button { border: 0; padding: 0; margin: 0; background: none; font: inherit; color: inherit; display: flex; align-items: center; justify-content: center; white-space: nowrap; }
input, select { font: inherit; border: 0; padding: 0; margin: 0; min-width: 0; outline: 0; }
svg { flex: none; display: block; }
.dd { width: 5px; height: 3px; margin-left: 4px; }

.title { position: relative; display: flex; align-items: center; height: 26px; flex: none; background: #d03d45; }
.orb { position: absolute; left: 2px; top: 3px; z-index: 3; }
.qat { display: flex; align-items: center; height: 24px; margin-left: 36px; width: 106px; padding-left: 15px; gap: 8px; border: 1px solid #a94a55; border-radius: 2px 12px 12px 14px; background: linear-gradient(#da8288, #d8878d); }
.qat .arrow { margin-right: 3px; margin-left: -1px; }
.custom { margin-left: 7px; }
h1 { position: absolute; left: 0; right: 0; margin: 0; text-align: center; font-size: 11px; font-weight: 400; color: #111; pointer-events: none; }
.winbtns { display: flex; margin-left: auto; margin-right: 2px; z-index: 1; }
.winbtns button { width: 46px; height: 26px; }

.tabs { display: flex; gap: 1px; height: 23px; flex: none; padding-left: 47px; background: #bfdbff; }
.tab { padding: 0 14px; height: 24px; }
.tab.on { margin-top: 1px; height: 23px; padding: 0 11px; border: 1px solid #8db2e3; border-bottom: 0; border-radius: 3px 3px 0 0; background: linear-gradient(#f5fafe, #e1eaf6); z-index: 1; }
.docbtns { display: flex; margin-left: auto; gap: 13px; padding-right: 6px; align-items: center; }

.ribbon { display: flex; gap: 3px; height: 91px; flex: none; margin: 0 1px; padding: 2px 1px; border: 1px solid #8db2e3; border-bottom-color: #9cebf8; border-radius: 4px; background: linear-gradient(#dbe6f4 0, #d3e0f0 17px, #c7d8ed 18px, #e3f4ff 100%); }
.group { display: flex; flex-direction: column; height: 85px; flex: none; border: 1px solid #a8c4e0; border-radius: 3px; background: linear-gradient(#dde8f5 0, #d5e2f1 15px, #c9daee 16px, #dbe9f6 68px); }
.g-clip { width: 151px; } .g-font { width: 196px; } .g-align { width: 251px; } .g-num { width: 136px; }
.g-styles { width: 174px; } .g-cells { width: 134px; } .g-edit { width: 176px; }
.group footer { position: relative; display: flex; justify-content: center; height: 15px; line-height: 15px; background: #c1d8f0; color: #3e6aaa; border-radius: 0 0 2px 2px; flex: none; padding-right: 16px; }
.g-styles footer, .g-cells footer, .g-edit footer { padding-right: 0; }
.launch { position: absolute; right: 4px; top: 3px; }
.body { display: flex; height: 68px; padding: 0 3px; }
.rows { display: flex; flex-direction: column; align-items: flex-start; gap: 7px; padding-top: 9px; }
.body.rows { padding: 9px 3px 0; align-items: stretch; }
.row { display: flex; gap: 4px; height: 22px; }
.row.tight { gap: 1px; }
.push { margin-left: auto; }
.stack { display: flex; flex-direction: column; align-items: flex-start; }
.small { height: 22px; gap: 3px; }
.big { flex-direction: column; justify-content: flex-start; height: 67px; padding-top: 3px; line-height: 13px; border: 1px solid transparent; border-radius: 2px; }
.big > span { margin-top: 3px; }
.big > .l2 { display: flex; align-items: center; margin-top: 0; height: 13px; }
.big .l2 .dd { margin-left: 3px; }
.w21.w21 { width: 21px; } .w22.w22 { width: 22px; } .w30.w30 { width: 30px; } .w32.w32 { width: 32px; } .w33.w33 { width: 33px; }
.w41 { width: 42px; } .w42 { width: 42px; } .w44 { width: 46px; } .w52 { width: 52px; } .w70 { width: 70px; }
.hot { border-color: #d5b45e; background: linear-gradient(#fff6c8 0, #ffe995 36%, #ffd04a 37%, #ffe883 100%); }
.g-clip .stack { margin-left: 4px; }
.g-edit .stack { width: 82px; padding-left: 4px; }
.g-edit .small { gap: 4px; }
.g-edit .small .dd, .g-align .small .dd { margin-left: 1px; }
.g-edit .body { padding-right: 0; }

.combo { position: relative; display: flex; align-items: center; height: 22px; border: 1px solid #abc1de; background: #eaf2fb; }
.combo select { appearance: none; width: 100%; height: 100%; padding-left: 2px; background: transparent; color: #000; }
.combo .dd { position: absolute; right: 4px; }
.c-font { width: 97px; } .c-size { width: 42px; } .c-num { width: 128px; }
.seg { display: flex; height: 22px; border: 1px solid #8fb1dc; border-radius: 3px; background: linear-gradient(#d9e5f4, #cfdef1 45%, #bfd3ee 46%, #d0e2f8); }
.seg button { width: 23px; border-left: 1px solid #b3cae7; }
.seg button:first-child { border-left: 0; }
.seg .on { background: linear-gradient(#fbcf92, #fdae52 45%, #fd9f37 46%, #ffe590); }
.ser { font-family: "Liberation Serif", serif; font-weight: 700; color: #111; font-size: 14px; }
.it { font-style: italic; }
.un span { text-decoration: underline; }
.seg .a1, .seg .a2 { width: 22px; }
.a1 { font-size: 16px; } .a2 { font-size: 13px; }
.a1 svg, .a2 svg { align-self: flex-start; margin-top: 3px; }
.fcol .ser { font-size: 16px; line-height: 13px; height: 17px; padding: 0 2px; color: #2c5aa2; border-bottom: 4px solid #f00; }
.seg .pct { color: #222; font-size: 12px; }
.comma { font-size: 20px; line-height: 8px; padding-bottom: 8px; }
.dec { font: 700 8px "Liberation Sans", sans-serif; fill: #333; }
.vsep { width: 1px; height: 54px; margin: 6px 5px 0 4px; background: #9cb9da; }

.cf { position: relative; z-index: 10; }
.menu { position: absolute; left: 0; top: 68px; width: 179px; border: 1px solid #868c94; border-radius: 2px; background: rgba(251, 251, 251, .95); box-shadow: 3px 3px 3px rgba(0, 0, 0, .25); color: #14286e; }
.mi { position: relative; width: 100%; height: 44px; justify-content: flex-start; padding-left: 6px; gap: 8px; font-weight: 700; }
.mi span { line-height: 14px; }
.mi .sub { position: absolute; right: 9px; }
.sm { height: 22px; font-weight: 400; padding-left: 5px; gap: 12px; }
.msep { display: block; height: 2px; margin: 0 1px; border-top: 1px solid #c5c5c5; }
.inset { margin-left: 44px; }
.lower { background: linear-gradient(90deg, #e9eeee 24px, #c6cccf 24px, #c6cccf 25px, transparent 25px); }

.fbar { display: flex; height: 23px; flex: none; margin-top: 2px; border: 1px solid #6791bd; border-right: 0; background: #fff; color: #000; font-size: 13px; }
.namebox { display: flex; align-items: center; width: 158px; }
.namebox input { width: 138px; text-align: center; margin-right: 7px; background: transparent; }
.fx { display: flex; align-items: center; justify-content: space-between; width: 85px; padding: 0 6px; border-right: 1px solid #6791bd; border-left: 1px solid #6791bd; border-radius: 11px 0 0 11px; background: linear-gradient(#fff, #a9c7ed); }
.fx i { width: 8px; height: 8px; border-radius: 50%; background: #b9c8de; border: 1px solid #d7e1ee; }
.fx button { font-family: "Liberation Serif", serif; font-size: 15px; font-weight: 700; color: #555; }
.fx .x { font-size: 12px; }
.finput { flex: 1; padding: 0 0 1px 7px; }
.expand { width: 16px; border: 1px solid #6791bd; background: linear-gradient(#fff, #b5cdec); }

.work { display: flex; flex: 1; min-height: 0; margin-top: 2px; border-top: 1px solid #7a9dc5; }
.gridwrap { position: relative; flex: 1; min-width: 0; overflow: hidden; background: #fff; }
table { width: 100%; table-layout: fixed; border-collapse: separate; border-spacing: 0; font-size: 13px; color: #000; }
col { width: 64px; }
.c0 { width: 26px; } .cC { width: 70px; } .cD { width: 94px; } .cE { width: 68px; }
col:last-child { width: auto; }
tr { height: 20px; }
.r2 { height: 19px; }
th, td { padding: 2px 2px 0; line-height: 17px; border-right: 1px solid #d0d7e5; border-bottom: 1px solid #d0d7e5; white-space: nowrap; overflow: hidden; }
th { font-weight: 400; color: #27413e; text-align: center; padding: 2px 0 0; border-color: #9eb6ce; background: #e4ecf7; }
.r2 th { padding-top: 1px; }
thead th { background: linear-gradient(#f9fbfd, #d3dbe9); font-size: 12px; }
.hl { background: #ffd58d; border-color: #f29536; }
thead .hl { background: linear-gradient(#f9d99f, #f1c15f); }
.corner { background: #a9c4e9; }
.corner svg { margin: 2px 3px 0 auto; }
td { text-align: left; }
.num { text-align: right; }
.sel { background: #e8ebf5; border-color: #cbd2e4; }
.r2 td { font-weight: 700; font-size: 16px; padding: 0 0 0 3px; line-height: 18px; }
.r12 td { font-family: "DejaVu Sans", sans-serif; font-size: 15px; padding-right: 4px; }
.selection { position: absolute; left: 25px; top: 38px; width: 362px; height: 182px; border: 3px solid #111; border-left-width: 2px; }
.selection i { position: absolute; right: -4px; bottom: -4px; width: 6px; height: 6px; background: #111; border: 1px solid #fff; border-width: 1px 0 0 1px; }
.vbar { display: flex; flex-direction: column; align-items: center; width: 16px; background: linear-gradient(90deg, #6f90bd, #85a4cc); border-left: 1px solid #c7dcf7; }
.vbar .split { width: 14px; height: 7px; border: 2px solid #e8f1fc; background: #6b8db9; }
.vbar button { width: 15px; height: 17px; flex: none; }
.vbar .thumb { flex: 441; width: 15px; background: linear-gradient(90deg, #f3f5f8, #dfe4ec 50%, #b7c4d4); }
.vbar .rest { flex: 41; }
.thumb { display: flex; align-items: center; justify-content: center; border: 1px solid #4d6587; border-radius: 2px; }

.bottom { display: flex; height: 17px; flex: none; border-bottom: 1px solid #4c72a9; background: #9ab6dc; }
.sheets { display: flex; flex: 810; align-items: stretch; min-width: 0; border-top: 1px solid #7694c0; background: linear-gradient(#abc4e5, #8caad4); }
.navs { display: flex; width: 63px; background: linear-gradient(#dbe9fb, #b9d3f6); border-right: 1px solid #7694c0; padding-left: 2px; }
.navs button { width: 15px; }
.sheet { padding: 0 4px 0 3px; font-size: 12px; background: linear-gradient(#e3eefd, #c0d7f7); }
.s0 { padding: 0 2px 0 9px; font-weight: 700; background: #fff; }
.s3 { padding: 0 5px; }
.s5 { padding: 0 8px; }
.newsheet { background: #cfe0f8; padding: 0 2px 0 0; }
.hbar { display: flex; flex: 556; align-items: center; background: #7895c0; }
.hbar button { width: 18px; height: 16px; flex: none; }
.hbar .split { width: 7px; height: 14px; border: 2px solid #edf4fd; background: #6f91bd; }
.hbar .thumb { flex: 442; height: 15px; background: linear-gradient(#f5f7fa, #dde3eb 50%, #b1bfd1); }
.hbar .rest { flex: 49; }
.hbar .split:last-child { margin-right: 18px; }

.status { display: flex; align-items: stretch; height: 21px; flex: none; color: #1b2f72; background: linear-gradient(#e3effd, #c8dcf6 35%, #b2cff4 36%, #dbe9fa); }
.status > * { display: flex; align-items: center; padding-bottom: 2px; }
.ready { width: 47px; padding-left: 7px; border-right: 1px solid #87a9d6; }
.stats { margin-left: auto; gap: 15px; padding-right: 11px; }
.zoomer { width: 244px; padding-left: 4px; border-left: 1px solid #7b9ccc; background: linear-gradient(#b5d1f7, #8cb4eb 40%, #6a9be0 41%, #8ab3ee); }
.views { display: flex; height: 18px; border: 1px solid #5e86bd; border-radius: 2px; background: #c5d8f0; }
.views button { width: 18px; }
.views .on { background: #ffd36e; }
.pc { margin-left: 9px; width: 27px; }
.round { margin-left: 8px; }
.zoomer input { appearance: none; width: 102px; height: 16px; background: linear-gradient(transparent 7px, #dceafd 7px, #dceafd 8px, #4974ad 8px, #4974ad 9px, transparent 9px); }
.zoomer input::-webkit-slider-thumb { appearance: none; width: 9px; height: 13px; background: linear-gradient(#edf2fb, #edf2fb) 1px 1px / 7px 8px no-repeat, #476592; clip-path: polygon(0 0, 100% 0, 100% 65%, 50% 100%, 0 65%); }
.zoomer input + .round { margin-left: 0; }
</style>
